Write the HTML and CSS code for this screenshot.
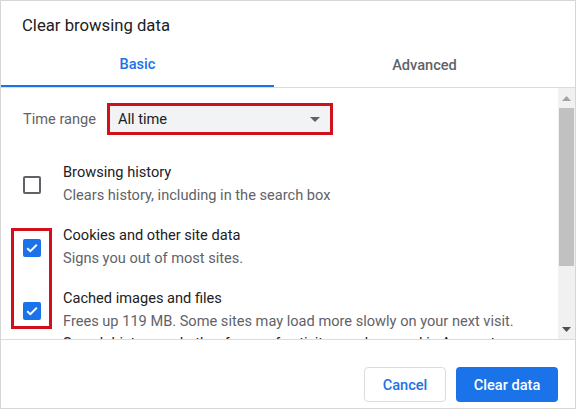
FILE: index.html
```html
<!DOCTYPE html>
<html>
<head>
<meta charset="utf-8">
<link rel="stylesheet" href="styles.css">
</head>
<body>
<div class="dialog">
  <div class="title">Clear browsing data</div>
  <div class="tabs">
    <div class="tab tab-active">Basic</div>
    <div class="tab tab-other">Advanced</div>
  </div>
  <div class="body">
    <div class="content">
      <div class="range-row">
        <span class="range-label">Time range</span>
        <div class="select">
          <span class="select-value">All time</span>
          <svg class="select-arrow" width="10" height="5" viewBox="0 0 10 5"><path d="M0 0h10L5 5z" fill="#5f6368"/></svg>
        </div>
      </div>
      <div class="items">
        <div class="item">
          <span class="cb"></span>
          <div class="item-text">
            <div class="item-title">Browsing history</div>
            <div class="item-desc">Clears history, including in the search box</div>
          </div>
        </div>
        <div class="item">
          <span class="cb cb-on"><svg width="18" height="18" viewBox="0 0 18 18"><path d="M4.2 9.2l3.1 3L13.8 5.8" fill="none" stroke="#fff" stroke-width="2"/></svg></span>
          <div class="item-text">
            <div class="item-title">Cookies and other site data</div>
            <div class="item-desc">Signs you out of most sites.</div>
          </div>
        </div>
        <div class="item">
          <span class="cb cb-on"><svg width="18" height="18" viewBox="0 0 18 18"><path d="M4.2 9.2l3.1 3L13.8 5.8" fill="none" stroke="#fff" stroke-width="2"/></svg></span>
          <div class="item-text">
            <div class="item-title">Cached images and files</div>
            <div class="item-desc">Frees up 119 MB. Some sites may load more slowly on your next visit.</div>
          </div>
        </div>
        <div class="notice">Search history and other forms of activity may be saved in Account</div>
      </div>
      <div class="highlight"></div>
    </div>
    <div class="scrollbar">
      <div class="sb-btn"><svg width="9" height="5" viewBox="0 0 9 5"><path d="M0 5L4.5 0 9 5z" fill="#a3a3a3"/></svg></div>
      <div class="sb-thumb"></div>
      <div class="sb-track"></div>
      <div class="sb-btn"><svg width="9" height="5" viewBox="0 0 9 5"><path d="M0 0h9L4.5 5z" fill="#505050"/></svg></div>
    </div>
  </div>
  <div class="footer">
    <button class="btn btn-cancel">Cancel</button>
    <button class="btn btn-primary">Clear data</button>
  </div>
</div>
</body>
</html>
```
FILE: styles.css
```css
* { box-sizing: border-box; }
html, body { margin: 0; padding: 0; background: #fff; }
body { font-family: Roboto, "Liberation Sans", Arial, sans-serif; color: #202124; }

.dialog {
  width: 576px;
  height: 409px;
  border: 1px solid #d6d6d6;
  display: flex;
  flex-direction: column;
  background: #fff;
}

.title {
  height: 39px;
  padding: 15px 0 0 21px;
  font-size: 16.7px;
  line-height: 20px;
  color: #202124;
}

.tabs {
  display: flex;
  height: 48px;
  border-bottom: 1px solid #dadce0;
}
.tab {
  height: 47px;
  display: flex;
  align-items: center;
  justify-content: center;
  font-size: 14.6px;
  font-weight: 500;
  padding-top: 3px;
}
.tab-active {
  width: 273px;
  color: #1a73e8;
  border-bottom: 2px solid #1a73e8;
}
.tab-other {
  flex: 1;
  color: #5f6368;
}

.body {
  height: 252px;
  display: flex;
  overflow: hidden;
  border-bottom: 1px solid #dadce0;
}
.content {
  flex: 1;
  position: relative;
  overflow: hidden;
  padding: 15px 0 0 22px;
}

.range-row {
  display: flex;
  align-items: center;
  gap: 11px;
}
.range-label {
  font-size: 14.6px;
  color: #5f6368;
}
.select {
  width: 226px;
  height: 32px;
  border: 3px solid #d0101b;
  background: #f1f3f4;
  display: flex;
  align-items: center;
  justify-content: space-between;
  padding: 0 10px 0 8px;
  font-size: 14.6px;
  color: #202124;
}

.items {
  margin-top: 27px;
  display: flex;
  flex-direction: column;
  gap: 20px;
}
.item {
  display: flex;
  align-items: center;
  gap: 22px;
}
.cb {
  width: 18px;
  height: 18px;
  border: 2px solid #5f6368;
  border-radius: 2px;
  flex: none;
  display: flex;
  margin-top: 2px;
}
.cb-on {
  border: none;
  background: #1a73e8;
}
.item-title {
  font-size: 14.6px;
  line-height: 20px;
  color: #202124;
}
.item-desc {
  font-size: 14.6px;
  line-height: 20px;
  margin-top: 3px;
  color: #5f6368;
  white-space: nowrap;
}
.notice {
  margin-top: -18px;
  padding-left: 40px;
  font-size: 14.6px;
  line-height: 20px;
  color: #202124;
  white-space: nowrap;
}

.highlight {
  position: absolute;
  left: 10px;
  top: 140px;
  width: 41px;
  height: 101px;
  border: 3px solid #d0101b;
}

.scrollbar {
  width: 17px;
  flex: none;
  background: #f1f1f1;
  display: flex;
  flex-direction: column;
}
.sb-btn {
  height: 20px;
  display: flex;
  align-items: center;
  justify-content: center;
}
.sb-thumb {
  height: 158px;
  background: #c1c1c1;
  margin: 0 1px 0 1px;
}
.sb-track { flex: 1; }

.footer {
  flex: 1;
  display: flex;
  justify-content: flex-end;
  align-items: flex-start;
  gap: 10px;
  padding: 27px 17px 0 0;
}
.btn {
  height: 35px;
  border-radius: 4px;
  font-family: Roboto, "Liberation Sans", Arial, sans-serif;
  font-size: 14.6px;
  font-weight: 500;
  cursor: pointer;
}
.btn-cancel {
  width: 82px;
  background: #fff;
  border: 1px solid #dadce0;
  color: #1a73e8;
}
.btn-primary {
  width: 102px;
  background: #1a73e8;
  border: none;
  color: #fff;
}
```
